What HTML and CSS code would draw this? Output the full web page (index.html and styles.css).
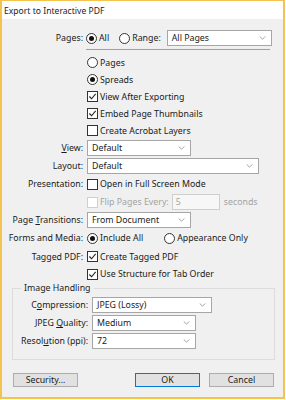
FILE: index.html
```html
<!DOCTYPE html>
<html lang="en">
<head>
    <meta charset="UTF-8">
    <title>Export to Interactive PDF</title>
    <link rel="stylesheet" href="styles.css">
</head>
<body>

    <div class="window">
        <div class="titlebar">Export to Interactive PDF</div>

        <div class="content">
            <div class="row pages-row">
                <label class="lbl">Pages:</label>
                <div class="field">
                    <span class="radio on"></span><span class="txt">All</span>
                    <span class="radio range-radio"></span><span class="txt">Range:</span>
                    <div class="select range-select">All Pages<svg class="chev" viewBox="0 0 8 5"><path d="M0.5 0.5 L4 4 L7.5 0.5" /></svg></div>
                </div>
            </div>

            <div class="sep"></div>

            <div class="row small">
                <span></span>
                <div class="field"><span class="radio"></span><span class="txt">Pages</span></div>
            </div>
            <div class="row small">
                <span></span>
                <div class="field"><span class="radio on"></span><span class="txt">Spreads</span></div>
            </div>
            <div class="row small">
                <span></span>
                <div class="field"><span class="check on"><svg viewBox="0 0 10 10"><path d="M1.5 5 L4 7.5 L8.5 2" /></svg></span><span class="txt">View After Exporting</span></div>
            </div>
            <div class="row small">
                <span></span>
                <div class="field"><span class="check on"><svg viewBox="0 0 10 10"><path d="M1.5 5 L4 7.5 L8.5 2" /></svg></span><span class="txt">Embed Page Thumbnails</span></div>
            </div>
            <div class="row small">
                <span></span>
                <div class="field"><span class="check"></span><span class="txt">Create Acrobat Layers</span></div>
            </div>

            <div class="row">
                <label class="lbl"><u>V</u>iew:</label>
                <div class="field"><div class="select short">Default<svg class="chev" viewBox="0 0 8 5"><path d="M0.5 0.5 L4 4 L7.5 0.5" /></svg></div></div>
            </div>
            <div class="row">
                <label class="lbl">Layout:</label>
                <div class="field"><div class="select long">Default<svg class="chev" viewBox="0 0 8 5"><path d="M0.5 0.5 L4 4 L7.5 0.5" /></svg></div></div>
            </div>
            <div class="row">
                <label class="lbl">Presentation:</label>
                <div class="field"><span class="check"></span><span class="txt">Open in Full Screen Mode</span></div>
            </div>
            <div class="row">
                <span></span>
                <div class="field disabled">
                    <span class="check"></span><span class="txt">Flip Pages Every:</span>
                    <div class="num">5</div>
                    <span class="txt secs">seconds</span>
                </div>
            </div>
            <div class="row">
                <label class="lbl">Page <u>T</u>ransitions:</label>
                <div class="field"><div class="select short">From Document<svg class="chev" viewBox="0 0 8 5"><path d="M0.5 0.5 L4 4 L7.5 0.5" /></svg></div></div>
            </div>
            <div class="row">
                <label class="lbl">Forms and Media:</label>
                <div class="field">
                    <span class="radio on"></span><span class="txt include">Include All</span>
                    <span class="radio"></span><span class="txt">Appearance Only</span>
                </div>
            </div>
            <div class="row tagged">
                <label class="lbl">Tagged PDF:</label>
                <div class="field"><span class="check on"><svg viewBox="0 0 10 10"><path d="M1.5 5 L4 7.5 L8.5 2" /></svg></span><span class="txt">Create Tagged PDF</span></div>
            </div>
            <div class="row structure">
                <span></span>
                <div class="field"><span class="check on"><svg viewBox="0 0 10 10"><path d="M1.5 5 L4 7.5 L8.5 2" /></svg></span><span class="txt">Use Structure for Tab Order</span></div>
            </div>

            <div class="group">
                <span class="legend">Image Handling</span>
                <div class="row grow">
                    <label class="lbl">C<u>o</u>mpression:</label>
                    <div class="field"><div class="select comp">JPEG (Lossy)<svg class="chev" viewBox="0 0 8 5"><path d="M0.5 0.5 L4 4 L7.5 0.5" /></svg></div></div>
                </div>
                <div class="row grow">
                    <label class="lbl">JPEG <u>Q</u>uality:</label>
                    <div class="field"><div class="select short">Medium<svg class="chev" viewBox="0 0 8 5"><path d="M0.5 0.5 L4 4 L7.5 0.5" /></svg></div></div>
                </div>
                <div class="row grow">
                    <label class="lbl">Resol<u>u</u>tion (ppi):</label>
                    <div class="field"><div class="select short">72<svg class="chev" viewBox="0 0 8 5"><path d="M0.5 0.5 L4 4 L7.5 0.5" /></svg></div></div>
                </div>
            </div>

            <div class="buttons">
                <button class="btn">Security...</button>
                <span class="spacer"></span>
                <button class="btn default">OK</button>
                <button class="btn">Cancel</button>
            </div>
        </div>
    </div>

</body>
</html>
```

FILE: styles.css
```css
/* Dialog window */
body {
    margin: 0;
    background: #ffffff;
    font-family: "Noto Sans", "Open Sans", sans-serif;
    font-size: 8.8px;
    color: #1a1a1a;
}

.window {
    box-sizing: border-box;
    width: 285px;
    height: 399px;
    border: 2px solid #f3c34f;
    border-top-width: 1px;
    background: #f0f0f0;
    display: flex;
    flex-direction: column;
}

.titlebar {
    height: 18px;
    line-height: 20px;
    padding-left: 2px;
    background: #ffffff;
    font-size: 8.6px;
    color: #222;
}

.content {
    padding-top: 11px;
}

/* Rows: label column + field */
.row {
    display: grid;
    grid-template-columns: 81px 1fr;
    column-gap: 4px;
    align-items: center;
    height: 18px;
}

.row.small {
    height: 17px;
}

.pages-row {
    height: 16px;
}

.tagged {
    height: 19px;
}

.structure {
    height: 16px;
}

.lbl {
    text-align: right;
    white-space: nowrap;
}

.lbl u {
    text-decoration-thickness: 1px;
    text-underline-offset: 1px;
}

.field {
    display: flex;
    align-items: center;
    white-space: nowrap;
}

.txt {
    margin-left: 2px;
}

.sep {
    height: 1px;
    background: #a0a0a0;
    margin: 3px 0 4px 84px;
    width: 184px;
}

/* Radios and checkboxes */
.radio {
    box-sizing: border-box;
    width: 11px;
    height: 11px;
    border: 1px solid #333;
    border-radius: 50%;
    background: #fff;
    display: inline-flex;
    align-items: center;
    justify-content: center;
    flex: none;
}

.radio.on::after {
    content: "";
    width: 5px;
    height: 5px;
    border-radius: 50%;
    background: #111;
}

.pages-row .field {
    margin-left: -1px;
}

.range-radio {
    margin-left: 10px;
}

.range-select {
    margin-left: 6px;
    width: 105px;
}

.include {
    margin-right: 21px;
}

.check {
    box-sizing: border-box;
    width: 11px;
    height: 11px;
    border: 1px solid #333;
    background: #fff;
    display: inline-block;
    flex: none;
}

.check svg {
    display: block;
    width: 9px;
    height: 9px;
}

.check path {
    fill: none;
    stroke: #222;
    stroke-width: 1.2;
}

/* Dropdowns */
.select {
    box-sizing: border-box;
    position: relative;
    height: 16px;
    line-height: 14px;
    padding-left: 4px;
    border: 1px solid #a6a6a6;
    background: #fff;
}

.select.short {
    width: 104px;
}

.select.long {
    width: 172px;
}

.select.comp {
    width: 120px;
}

.chev {
    position: absolute;
    right: 5px;
    top: 5px;
    width: 7px;
    height: 4px;
}

.chev path {
    fill: none;
    stroke: #8a8a8a;
    stroke-width: 1;
}

/* Disabled row */
.disabled {
    color: #a3a3a3;
}

.disabled .check {
    border-color: #cfcfcf;
}

.num {
    box-sizing: border-box;
    width: 48px;
    height: 16px;
    line-height: 14px;
    padding-left: 3px;
    margin-left: 3px;
    border: 1px solid #cfcfcf;
    background: #f7f7f7;
}

.secs {
    margin-left: 4px;
}

/* Image handling group */
.group {
    position: relative;
    margin: 6px 0 0 10px;
    width: 263px;
    box-sizing: border-box;
    border: 1px solid #dcdcdc;
    padding: 7px 0 9px;
}

.group .row {
    grid-template-columns: 75px 1fr;
}

.legend {
    position: absolute;
    top: -7px;
    left: 8px;
    padding: 0 3px;
    background: #f0f0f0;
    line-height: 13px;
}

/* Buttons */
.buttons {
    display: flex;
    margin: 13px 0 0 11px;
    width: 261px;
}

.spacer {
    flex: 1;
}

.btn {
    box-sizing: border-box;
    width: 65px;
    height: 14px;
    padding: 0;
    border: 1px solid #adadad;
    background: #e1e1e1;
    font-family: inherit;
    font-size: 8.8px;
    line-height: 12px;
    color: #1a1a1a;
}

.btn.default {
    border-color: #0078d7;
    margin-right: 9px;
}
```
